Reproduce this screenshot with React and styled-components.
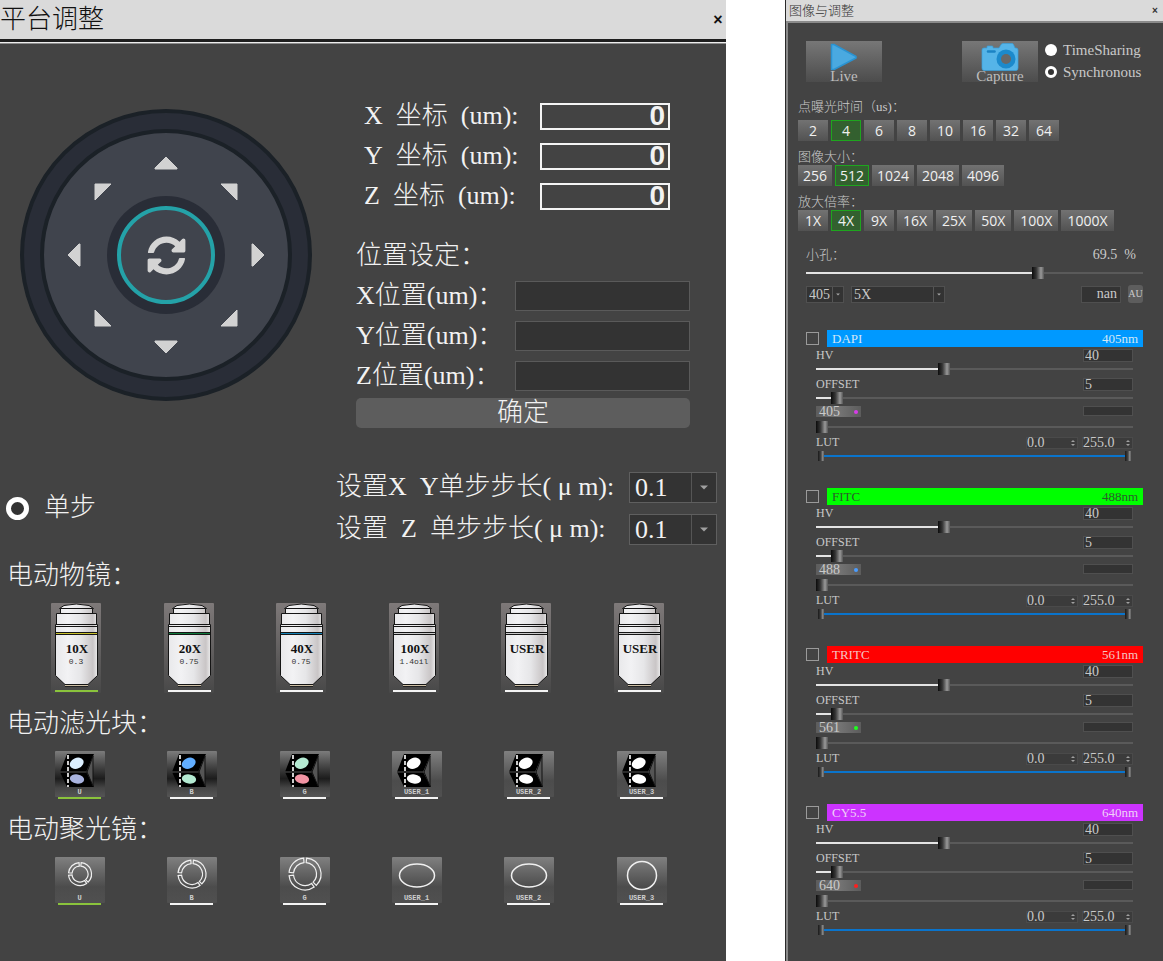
import React, { useState } from 'react';
import styled, { createGlobalStyle } from 'styled-components';
import { FaSyncAlt } from 'react-icons/fa';

const GlobalStyle = createGlobalStyle`
    * {
        box-sizing: border-box;
    }
    body {
        margin: 0;
        background: #fff;
        font-family: "Liberation Serif", "Noto Sans CJK SC", serif;
        font-weight: 300;
    }
    button, input, select {
        font: inherit;
        color: inherit;
        margin: 0;
        padding: 0;
        border: none;
        border-radius: 0;
        outline: none;
    }
    button {
        cursor: pointer;
    }
    svg {
        display: block;
    }
`;

const Page = styled.main`
    display: grid;
    grid-template-columns: minmax(0, 1fr) 378px;
    column-gap: 59px;
    min-height: 100vh;
`;

/* ---------- stage panel ---------- */

const StagePanel = styled.section`
    background: #434343;
    color: #f2f2f2;
    font-size: 26px;
`;

const StageHeader = styled.header`
    display: flex;
    justify-content: space-between;
    align-items: center;
    height: 44px;
    background: #dadada;
    color: #111;
    border-bottom: 1px solid #8c8c8c;
    box-shadow: inset 0 -1px #eee, inset 0 -4px #1e1e1e;
    padding-bottom: 3px;
`;

const Title = styled.h1`
    margin: 0;
    font-size: ${props => props.$small ? '13px' : '26px'};
    line-height: ${props => props.$small ? '20px' : '40px'};
    font-weight: 300;
`;

const Close = styled.button`
    background: none;
    width: 16px;
    height: 20px;
    line-height: 18px;
    font-family: "Liberation Sans", sans-serif;
    font-weight: 700;
    font-size: ${props => props.$small ? '10px' : '16px'};
`;

const Top = styled.div`
    display: flex;
    justify-content: space-between;
    align-items: flex-start;
    padding: 52px 36px 0 20px;
`;

const Dial = styled.div`
    flex: none;
    width: 292px;
    height: 292px;
    margin-top: 13px;
    padding: 16px;
    border: 4px solid #1b2127;
    border-radius: 50%;
    background: #292d37;
`;

const DialFace = styled.div`
    width: 252px;
    height: 252px;
    border: 4px solid #1b2127;
    border-radius: 50%;
    background: #40444d;
    display: grid;
    grid-template-columns: repeat(3, 92px);
    grid-template-rows: repeat(3, 92px);
    place-content: center;
    place-items: center;
`;

const Arrow = styled.button`
    background: none;
    padding: 8px;
    place-self: ${props => props.$place || 'center'};
`;

const Home = styled.button`
    display: flex;
    align-items: center;
    justify-content: center;
    width: 98px;
    height: 98px;
    border: 4px solid #24a2a8;
    border-radius: 50%;
    background: #40444d;
    color: #d4d4d4;
    font-size: 39px;
    box-shadow: 0 0 0 10px #292d37;
`;

const Form = styled.form`
    width: 334px;
`;

const Coords = styled.div`
    padding: 0 20px 20px 8px;
`;

const FormRow = styled.div`
    display: flex;
    justify-content: space-between;
    align-items: center;
    height: 40px;
    line-height: 40px;
    white-space: nowrap;
`;

const Readout = styled.input`
    width: 130px;
    height: 27px;
    border: 2px solid #f4f4f4;
    background: #434343;
    padding-right: 3px;
    text-align: right;
    font: 700 28px/22px "Liberation Sans Narrow", "Liberation Sans", sans-serif;
`;

const Field = styled.input`
    width: 175px;
    height: 30px;
    border: 1px solid #5a5a5a;
    background: #333;
`;

const GroupTitle = styled.h2`
    margin: 0;
    font-size: 26px;
    line-height: 40px;
    font-weight: 300;
`;

const Confirm = styled.button`
    width: 100%;
    height: 30px;
    line-height: 30px;
    margin-top: 2px;
    border-radius: 5px;
    background: #5d5d5d;
`;

const Steps = styled.div`
    display: flex;
    justify-content: space-between;
    align-items: center;
    padding: 38px 9px 0 6px;
`;

const RadioLabel = styled.label`
    display: flex;
    align-items: center;
    gap: ${props => props.$small ? '6px' : '15px'};
    font-size: ${props => props.$small ? '15px' : '26px'};
    line-height: ${props => props.$small ? '22px' : '40px'};
`;

const Radio = styled.input`
    appearance: none;
    flex: none;
    width: ${props => props.$small ? '12px' : '23px'};
    height: ${props => props.$small ? '12px' : '23px'};
    border-radius: 50%;
    background: #fff;
    &:checked {
        border: ${props => props.$small ? '3px' : '5px'} solid #fff;
        background: #333;
    }
`;

const StepRow = styled.div`
    display: flex;
    align-items: center;
    width: 381px;
    height: 42px;
    line-height: 42px;
    white-space: nowrap;
    label {
        flex: 1;
    }
`;

const SelectBox = styled.span`
    position: relative;
    display: inline-block;
    width: ${props => props.$width};
    height: ${props => props.$height};
    border: 1px solid ${props => props.$small ? '#505050' : '#5f5f5f'};
    background: #333;
    select {
        appearance: none;
        width: 100%;
        height: 100%;
        padding-left: ${props => props.$small ? '2px' : '5px'};
        line-height: ${props => props.$small ? '15px' : '29px'};
        background: none;
        display: block;
    }
    svg {
        position: absolute;
        top: 0;
        right: 0;
        width: ${props => props.$small ? '11px' : '25px'};
        height: 100%;
        border-left: 1px solid #555;
        pointer-events: none;
    }
`;

const Devices = styled.section`
    margin-top: ${props => props.$first ? '6px' : '11px'};
    h2 {
        padding-left: 7px;
    }
`;

const DeviceGrid = styled.div`
    display: grid;
    grid-template-columns: repeat(6, 1fr);
    justify-items: center;
    margin: ${props => props.$lens ? '7px 31px 0 20px' : '7px 28px 0 24px'};
`;

const Device = styled.button`
    background: none;
    width: 50px;
`;

const DropDown = ({ id, label, options, width, height, small }) => (
    <SelectBox $width={width} $height={height} $small={small}>
        <select id={id} aria-label={label}>
            {options.map(o => <option key={o}>{o}</option>)}
        </select>
        <svg viewBox={small ? '0 0 10 16' : '0 0 24 28'} aria-hidden="true">
            {small
                ? <path d="M3 7h4l-2 2z" fill="#a8a8a8" />
                : <path d="M8 12h8l-4 4z" fill="#a0a0a0" />}
        </svg>
    </SelectBox>
);

const arrows = {
    upLeft: { place: 'end', w: 18, h: 18, d: 'M1 1H17L1 17Z' },
    up: { w: 24, h: 14, d: 'M12 1L23 12V13H1V12Z' },
    upRight: { place: 'end start', w: 18, h: 18, d: 'M1 1H17V17Z' },
    left: { w: 14, h: 24, d: 'M1 12L12 1H13V23H12Z' },
    right: { w: 14, h: 24, d: 'M13 12L2 1H1V23H2Z' },
    downLeft: { place: 'start end', w: 18, h: 18, d: 'M1 1L17 17H1Z' },
    down: { w: 24, h: 14, d: 'M12 13L23 2V1H1V2Z' },
    downRight: { place: 'start', w: 18, h: 18, d: 'M17 1V17H1Z' },
};

const ArrowButton = ({ dir }) => {
    const { place, w, h, d } = arrows[dir];
    return (
        <Arrow type="button" $place={place} aria-label={dir}>
            <svg width={w} height={h}>
                <path d={d} fill="#d2d2d2" stroke="#d2d2d2" strokeLinejoin="round" />
            </svg>
        </Arrow>
    );
};

const lenses = [
    { name: '10X', na: '0.3', band: '#c8c02c' },
    { name: '20X', na: '0.75', band: '#0f7a3c' },
    { name: '40X', na: '0.75', band: '#1583b8' },
    { name: '100X', na: '1.4oil', band: '#c8c8c8' },
    { name: 'USER', band: '#c8c8c8' },
    { name: 'USER', band: '#c8c8c8' },
];

const Lens = ({ name, na, band, active }) => (
    <svg width="50" height="90" viewBox="0 0 50 90">
        <rect width="50" height="90" rx="1" fill="url(#lensBack)" />
        <g fill="url(#lensBody)" stroke="#151515">
            <path d="M8.5 5.5L13 2.5Q25 -.5 38 2.5L42.5 5.5Z" />
            <path d="M9.5 5.5H41.5V11.5H9.5Z" />
            <path d="M5.5 10.5H45.5V22.5H5.5Z" />
            <path d="M4.5 21.5H46.5V72.5L37 81.5H14L4.5 72.5Z" />
            <path d="M4.5 23.5H46.5M4.5 29.5H46.5M4.5 31.5H46.5" />
        </g>
        <path d="M5 30.5H46" stroke={band} />
        <path d="M14 82.5H37" stroke="#cdbfa5" />
        <path d="M14 83.5H37" stroke="#222" />
        <rect x="4" y="87" width="43" height="2" fill={active ? '#8ac33c' : '#f4f4f4'} />
        <text x="26" y="50" textAnchor="middle" fontSize="13" fontWeight="700" fill="#111">{name}</text>
        {na && (
            <text x="25" y="61" textAnchor="middle" fontSize="8" fontWeight="400" fill="#333" fontFamily="Liberation Mono, monospace">{na}</text>
        )}
    </svg>
);

const filters = [
    { name: 'U', top: '#dcefff', bottom: '#a9b3df' },
    { name: 'B', top: '#62aeff', bottom: '#b4ead2' },
    { name: 'G', top: '#b4ead2', bottom: '#f294a4' },
    { name: 'USER_1', top: '#fff', bottom: '#fff' },
    { name: 'USER_2', top: '#fff', bottom: '#fff' },
    { name: 'USER_3', top: '#fff', bottom: '#fff' },
];

const TileBase = ({ name, active, back, children }) => (
    <svg width="50" height="48" viewBox="0 0 50 48">
        <rect width="50" height="46" rx="1" fill={`url(#${back})`} />
        {children}
        <text x="24.5" y="42.5" textAnchor="middle" fontSize="7" fontWeight="700" fill="#cfcfcf" fontFamily="Liberation Mono, monospace">{name}</text>
        <rect x="3" y="46" width="43" height="2" fill={active ? '#8ac33c' : '#f4f4f4'} />
    </svg>
);

const FilterCube = ({ name, top, bottom, active }) => (
    <TileBase name={name} active={active} back={name.length > 1 ? 'plainBack' : 'cubeBack'}>
        <path d="M12 3H39L31 21L39 36H12L5 21Z" fill="#000" />
        <path d="M38 5V35L32 21Z" fill="#555" stroke="#111" />
        <path d="M5 21H31" stroke="#555" />
        <path d="M13 4V36" stroke="#fff" strokeWidth="1.6" strokeDasharray="4 2" />
        <ellipse cx="21.7" cy="12.3" rx="7.2" ry="5.3" fill={top} transform="rotate(-25 21.7 12.3)" />
        <ellipse cx="22" cy="28" rx="7.2" ry="4.6" fill={bottom} transform="rotate(8 22 28)" />
    </TileBase>
);

const condensers = [
    { name: 'U', r: 11.5, inner: 8 },
    { name: 'B', r: 14, inner: 10.5 },
    { name: 'G', r: 16, inner: 11.5 },
    { name: 'USER_1', rx: 17.5, ry: 11.5 },
    { name: 'USER_2', rx: 17.5, ry: 11.5 },
    { name: 'USER_3', rx: 14.5, ry: 14 },
];

const point = (r, deg) => {
    const a = deg * Math.PI / 180;
    return `${(25 + r * Math.cos(a)).toFixed(2)} ${(17 + r * Math.sin(a)).toFixed(2)}`;
};

// closed outline of one piece of a phase ring
const ringPiece = (outer, inner, from, to) => {
    const large = to - from > 180 ? 1 : 0;
    return `M${point(outer, from)}A${outer} ${outer} 0 ${large} 1 ${point(outer, to)}`
        + `L${point(inner, to)}A${inner} ${inner} 0 ${large} 0 ${point(inner, from)}Z`;
};

const Condenser = ({ name, r, inner, rx, ry, active }) => (
    <TileBase name={name} active={active} back="plainBack">
        <g fill="none" stroke="#f0f0f0" strokeWidth="1.2">
            {r ? (
                <>
                    <path d={ringPiece(r, inner, 186, 265)} />
                    <path d={ringPiece(r, inner, 276, 405)} />
                    <path d={ringPiece(r, inner, 55, 174)} />
                </>
            ) : <ellipse cx="25" cy="18.5" rx={rx} ry={ry} strokeWidth="1.5" />}
        </g>
    </TileBase>
);

const Defs = styled.svg`
    position: absolute;
    width: 0;
    height: 0;
`;

const Gradients = () => (
    <Defs aria-hidden="true">
        <defs>
            <linearGradient id="lensBack" x1="0" y1="0" x2="0" y2="1">
                <stop offset="0" stopColor="#7e7979" />
                <stop offset="1" stopColor="#484848" />
            </linearGradient>
            <linearGradient id="lensBody" gradientUnits="userSpaceOnUse" x1="4" y1="0" x2="47" y2="0">
                <stop offset="0" stopColor="#e8e8ea" />
                <stop offset=".3" stopColor="#f2f2f4" />
                <stop offset=".6" stopColor="#e6e6e8" />
                <stop offset=".88" stopColor="#c9c5c6" />
                <stop offset="1" stopColor="#efefef" />
            </linearGradient>
            <linearGradient id="cubeBack" x1="0" y1="0" x2="0" y2="1">
                <stop offset="0" stopColor="#7c7c7c" />
                <stop offset=".3" stopColor="#4a4a4a" />
                <stop offset=".6" stopColor="#1c1c1c" />
                <stop offset=".8" stopColor="#454545" />
                <stop offset="1" stopColor="#555" />
            </linearGradient>
            <linearGradient id="plainBack" x1="0" y1="0" x2="0" y2="1">
                <stop offset="0" stopColor="#808080" />
                <stop offset=".65" stopColor="#4c4c4c" />
                <stop offset="1" stopColor="#505050" />
            </linearGradient>
        </defs>
    </Defs>
);

const Stage = () => (
    <StagePanel>
        <StageHeader>
            <Title>平台调整</Title>
            <Close aria-label="关闭">×</Close>
        </StageHeader>
        <Top>
            <Dial>
                <DialFace>
                    <ArrowButton dir="upLeft" />
                    <ArrowButton dir="up" />
                    <ArrowButton dir="upRight" />
                    <ArrowButton dir="left" />
                    <Home type="button" aria-label="reset"><FaSyncAlt /></Home>
                    <ArrowButton dir="right" />
                    <ArrowButton dir="downLeft" />
                    <ArrowButton dir="down" />
                    <ArrowButton dir="downRight" />
                </DialFace>
            </Dial>
            <Form onSubmit={e => e.preventDefault()}>
                <Coords>
                    {['X', 'Y', 'Z'].map(axis => (
                        <FormRow key={axis}>
                            <label htmlFor={`coord${axis}`}>{axis}&ensp;坐标&ensp;(um):</label>
                            <Readout id={`coord${axis}`} readOnly value="0" />
                        </FormRow>
                    ))}
                </Coords>
                <GroupTitle>位置设定：</GroupTitle>
                {['X', 'Y', 'Z'].map(axis => (
                    <FormRow key={axis}>
                        <label htmlFor={`pos${axis}`}>{axis}位置(um)：</label>
                        <Field id={`pos${axis}`} />
                    </FormRow>
                ))}
                <Confirm>确定</Confirm>
            </Form>
        </Top>
        <Steps>
            <RadioLabel><Radio type="radio" name="mode" defaultChecked />单步</RadioLabel>
            <div>
                <StepRow>
                    <label htmlFor="stepXY">设置X&ensp;Y单步步长( μ m):</label>
                    <DropDown id="stepXY" options={['0.1', '1', '10']} width="88px" height="31px" />
                </StepRow>
                <StepRow>
                    <label htmlFor="stepZ">设置&ensp;Z&ensp;单步步长( μ m):</label>
                    <DropDown id="stepZ" options={['0.1', '1', '10']} width="88px" height="31px" />
                </StepRow>
            </div>
        </Steps>
        <Devices $first>
            <GroupTitle>电动物镜：</GroupTitle>
            <DeviceGrid $lens>
                {lenses.map((l, i) => <Device key={i}><Lens {...l} active={i === 0} /></Device>)}
            </DeviceGrid>
        </Devices>
        <Devices>
            <GroupTitle>电动滤光块：</GroupTitle>
            <DeviceGrid>
                {filters.map((f, i) => <Device key={f.name}><FilterCube {...f} active={i === 0} /></Device>)}
            </DeviceGrid>
        </Devices>
        <Devices>
            <GroupTitle>电动聚光镜：</GroupTitle>
            <DeviceGrid>
                {condensers.map((c, i) => <Device key={c.name}><Condenser {...c} active={i === 0} /></Device>)}
            </DeviceGrid>
        </Devices>
    </StagePanel>
);

/* ---------- image panel ---------- */

const ImagePanel = styled.section`
    display: flex;
    flex-direction: column;
    border-left: 1px solid #2a2a2a;
    background: #434343;
    color: #c9c9c9;
    font-size: 13px;
`;

const ImageHeader = styled.header`
    display: flex;
    justify-content: space-between;
    align-items: center;
    height: 21px;
    padding-left: 3px;
    background: #dadada;
    color: #333;
`;

const ImageBody = styled.div`
    flex: 1;
    border-left: 2px solid #8a8a8a;
    border-top: 2px solid #8a8a8a;
`;

const Acquire = styled.div`
    display: flex;
    align-items: flex-start;
    gap: 6px;
    padding: 18px 20px 0 18px;
`;

const BigButton = styled.button`
    display: flex;
    flex-direction: column;
    align-items: center;
    width: 76px;
    height: 41px;
    padding-top: 2px;
    background: linear-gradient(#777, #4c4c4c);
    font-size: 15px;
    line-height: 11px;
    color: #bdbdbd;
    margin-right: ${props => props.$push ? 'auto' : '0'};
`;

const RadioStack = styled.div`
    width: 99px;
    margin-top: -2px;
    padding-left: 1px;
`;

const Choices = styled.fieldset`
    border: none;
    min-width: 0;
    margin: ${props => props.$first ? '17px' : '9px'} 0 0;
    padding: 0 0 0 10px;
    legend {
        padding: 0;
        line-height: 14px;
        margin-bottom: ${props => props.$first ? '6px' : '1px'};
    }
`;

const ChoiceRow = styled.div`
    display: flex;
    gap: 3px;
`;

const Choice = styled.button`
    min-width: 30px;
    height: 21px;
    padding: 0 ${props => props.$wide ? '6px' : '5px'};
    background: linear-gradient(#727272, #525252);
    font: 400 14px/20px "Open Sans", "Noto Sans", sans-serif;
    color: #f0f0f0;
    ${props => props.$on && `
        background: #33602f;
        box-shadow: inset 0 0 0 1px #1ea51e;
    `}
`;

const Pinhole = styled.div`
    padding: 16px 20px 0 18px;
`;

const PinholeText = styled.div`
    display: flex;
    justify-content: space-between;
    padding-right: 7px;
    line-height: 16px;
    margin-bottom: 4px;
    output {
        font-size: 14px;
    }
`;

const PinholeRow = styled.div`
    display: flex;
    align-items: center;
    gap: 7px;
    margin-top: 7px;
    font-size: 14px;
    line-height: 14px;
`;

const Value = styled.input`
    width: ${props => props.$width || '50px'};
    height: ${props => props.$height || '13px'};
    margin-left: ${props => props.$push ? 'auto' : '0'};
    border: 1px solid #4f4f4f;
    background: #333;
    padding: 0 3px 0 1px;
    font-size: 14px;
    line-height: 11px;
    text-align: ${props => props.$right ? 'right' : 'left'};
`;

const Unit = styled.button`
    width: 15px;
    height: 18px;
    border-radius: 3px;
    background: #5d5d5d;
    font-size: 10px;
    line-height: 18px;
`;

const Range = styled.input`
    appearance: none;
    display: block;
    width: 100%;
    height: 11px;
    background: linear-gradient(90deg, #e4e4e4 ${props => props.$fill}%, #5a5a5a ${props => props.$fill}%) center / 100% 2px no-repeat;
    &::-webkit-slider-thumb {
        appearance: none;
        width: 12px;
        height: 12px;
        background: linear-gradient(90deg, #0c0c0c 0, #333 35%, #555 50%, #999 75%, #555 100%);
    }
`;

const Slider = ({ value, label }) => {
    const [current, setCurrent] = useState(value);

    return (
        <Range
            type="range"
            step="0.5"
            aria-label={label}
            value={current}
            $fill={current}
            onChange={e => setCurrent(e.target.value)}
        />
    );
};

const Channels = styled.div`
    display: flex;
    flex-direction: column;
    gap: 27px;
    margin-top: 27px;
    padding: 0 20px 25px 18px;
`;

const ChannelHead = styled.label`
    display: flex;
    align-items: center;
    gap: 8px;
`;

const Tick = styled.input`
    appearance: none;
    width: 13px;
    height: 13px;
    border: 1px solid #9a9a9a;
    &:checked {
        background: #9a9a9a;
    }
`;

const ChannelBar = styled.span`
    flex: 1;
    display: flex;
    justify-content: space-between;
    height: 17px;
    padding: 0 5px;
    line-height: 18px;
    background: ${props => props.$color};
    color: ${props => props.$ink};
`;

const Params = styled.div`
    display: flex;
    flex-direction: column;
    gap: 3px;
    padding: 1px 10px 0;
`;

const ParamRow = styled.div`
    display: flex;
    justify-content: space-between;
    align-items: ${props => props.$start ? 'flex-start' : 'center'};
    height: 15px;
    font-size: 12px;
`;

const Laser = styled.button`
    display: flex;
    align-items: center;
    justify-content: space-between;
    width: 45px;
    height: 11px;
    padding: 0 3px;
    background: linear-gradient(90deg, #5c5c5c, #757575 50%, #5c5c5c);
    font-size: 14px;
    line-height: 11px;
    &::after {
        content: '';
        width: 4px;
        height: 4px;
        border-radius: 50%;
        background: ${props => props.$dot};
    }
`;

const SpinGroup = styled.div`
    display: flex;
    gap: 4px;
`;

const SpinBox = styled.span`
    display: flex;
    align-items: center;
    width: ${props => props.$width};
    height: 12px;
    border: 1px solid #4a4a4a;
    background: #3b3b3b;
    input {
        flex: 1;
        min-width: 0;
        height: 12px;
        background: none;
        font-size: 14px;
        line-height: 12px;
    }
`;

const Spin = ({ value, width, label }) => (
    <SpinBox $width={width}>
        <input defaultValue={value} aria-label={label} />
        <svg width="8" height="10" aria-hidden="true">
            <path d="M2 4h4l-2-2zM2 6h4l-2 2z" fill="#a0a0a0" />
        </svg>
    </SpinBox>
);

const LutTrack = styled.div`
    position: relative;
    height: 11px;
    background: linear-gradient(#0a74cc, #0a74cc) center / calc(100% - 12px) 2px no-repeat;
    input {
        position: absolute;
        top: 0;
        left: 2px;
        width: calc(100% - 4px);
        height: 11px;
        appearance: none;
        background: none;
        pointer-events: none;
    }
    input::-webkit-slider-thumb {
        appearance: none;
        pointer-events: auto;
        width: 6px;
        height: 10px;
        background: linear-gradient(90deg, #1a1a1a 0, #444 50%, #909090 80%, #555 100%);
    }
`;

const channels = [
    { name: 'DAPI', wave: '405', color: '#0099ff', ink: '#d4e8f6', dot: '#d63be8' },
    { name: 'FITC', wave: '488', color: '#00ff00', ink: '#2c5c2c', dot: '#4a9cff' },
    { name: 'TRITC', wave: '561', color: '#ff0000', ink: '#f6c4c4', dot: '#1eff1e' },
    { name: 'CY5.5', wave: '640', color: '#cc33ff', ink: '#f0d0f8', dot: '#ff1e1e' },
];

const Channel = ({ name, wave, color, ink, dot }) => (
    <div>
        <ChannelHead>
            <Tick type="checkbox" />
            <ChannelBar $color={color} $ink={ink}>
                <span>{name}</span>
                <span>{wave}nm</span>
            </ChannelBar>
        </ChannelHead>
        <Params>
            <div>
                <ParamRow>
                    <label htmlFor={`${name}hv`}>HV</label>
                    <Value id={`${name}hv`} defaultValue="40" />
                </ParamRow>
                <Slider value={40} label={`${name} HV`} />
            </div>
            <div>
                <ParamRow>
                    <label htmlFor={`${name}offset`}>OFFSET</label>
                    <Value id={`${name}offset`} defaultValue="5" />
                </ParamRow>
                <Slider value={5} label={`${name} OFFSET`} />
            </div>
            <div>
                <ParamRow $start>
                    <Laser $dot={dot}>{wave}</Laser>
                    <Value $height="10px" aria-label={`${wave} power`} />
                </ParamRow>
                <Slider value={0} label={`${wave} laser`} />
            </div>
            <div>
                <ParamRow>
                    <span>LUT</span>
                    <SpinGroup>
                        <Spin value="0.0" width="52px" label={`${name} LUT min`} />
                        <Spin value="255.0" width="51px" label={`${name} LUT max`} />
                    </SpinGroup>
                </ParamRow>
                <LutTrack>
                    <input type="range" defaultValue="0" aria-label={`${name} LUT low`} />
                    <input type="range" defaultValue="100" aria-label={`${name} LUT high`} />
                </LutTrack>
            </div>
        </Params>
    </div>
);

const ChoiceGroup = ({ title, options, initial, first, wide }) => {
    const [picked, setPicked] = useState(initial);

    return (
        <Choices $first={first}>
            <legend>{title}</legend>
            <ChoiceRow>
                {options.map(o => (
                    <Choice key={o} $on={o === picked} $wide={wide} onClick={() => setPicked(o)}>{o}</Choice>
                ))}
            </ChoiceRow>
        </Choices>
    );
};

const Imaging = () => (
    <ImagePanel>
        <ImageHeader>
            <Title $small>图像与调整</Title>
            <Close $small aria-label="关闭">×</Close>
        </ImageHeader>
        <ImageBody>
            <Acquire>
                <BigButton $push>
                    <svg width="28" height="28" viewBox="0 0 28 28">
                        <path d="M1.5 1.5L4 1.5L26 13.5V15L4 26.5H1.5Z" fill="#4aa9e0" stroke="#2a93d2" strokeWidth="1.5" strokeLinejoin="round" />
                    </svg>
                    Live
                </BigButton>
                <BigButton>
                    <svg width="38" height="28" viewBox="0 0 38 28">
                        <path d="M3 5H6V3.5Q6 3 6.500 3H11Q12 3 12 4V5H18L20.500 1Q21 .5 22 .5H31Q32 .5 32.500 1.500L34 5H35Q37 5 37 7V25Q37 27.500 35 27.500H3Q1 27.500 1 25V7Q1 5 3 5Z" fill="#55b4e8" stroke="#3a9fda" strokeWidth=".7" />
                        <path d="M7 8.500H13.500" stroke="#1b83c4" strokeWidth="2.500" strokeLinecap="round" />
                        <circle cx="25" cy="16" r="9.500" fill="#1c8acc" />
                        <circle cx="25" cy="16" r="5" fill="#686868" />
                    </svg>
                    Capture
                </BigButton>
                <RadioStack>
                    <RadioLabel $small><Radio $small type="radio" name="scan" />TimeSharing</RadioLabel>
                    <RadioLabel $small><Radio $small type="radio" name="scan" defaultChecked />Synchronous</RadioLabel>
                </RadioStack>
            </Acquire>
            <ChoiceGroup first title="点曝光时间（us)：" initial="4" options={['2', '4', '6', '8', '10', '16', '32', '64']} />
            <ChoiceGroup title="图像大小：" initial="512" options={['256', '512', '1024', '2048', '4096']} />
            <ChoiceGroup wide title="放大倍率：" initial="4X" options={['1X', '4X', '9X', '16X', '25X', '50X', '100X', '1000X']} />
            <Pinhole>
                <PinholeText>
                    <span>小孔：</span>
                    <output>69.5&ensp;%</output>
                </PinholeText>
                <Slider value={69.5} label="小孔" />
                <PinholeRow>
                    <DropDown small label="激光" options={['405', '488', '561', '640']} width="38px" height="17px" />
                    <DropDown small label="物镜" options={['5X', '10X']} width="94px" height="17px" />
                    <Value $push $right $width="40px" $height="17px" defaultValue="nan" aria-label="AU" />
                    <Unit>AU</Unit>
                </PinholeRow>
            </Pinhole>
            <Channels>
                {channels.map(c => <Channel key={c.name} {...c} />)}
            </Channels>
        </ImageBody>
    </ImagePanel>
);

const App = () => (
    <>
        <GlobalStyle />
        <Gradients />
        <Page>
            <Stage />
            <Imaging />
        </Page>
    </>
);

export default App;
